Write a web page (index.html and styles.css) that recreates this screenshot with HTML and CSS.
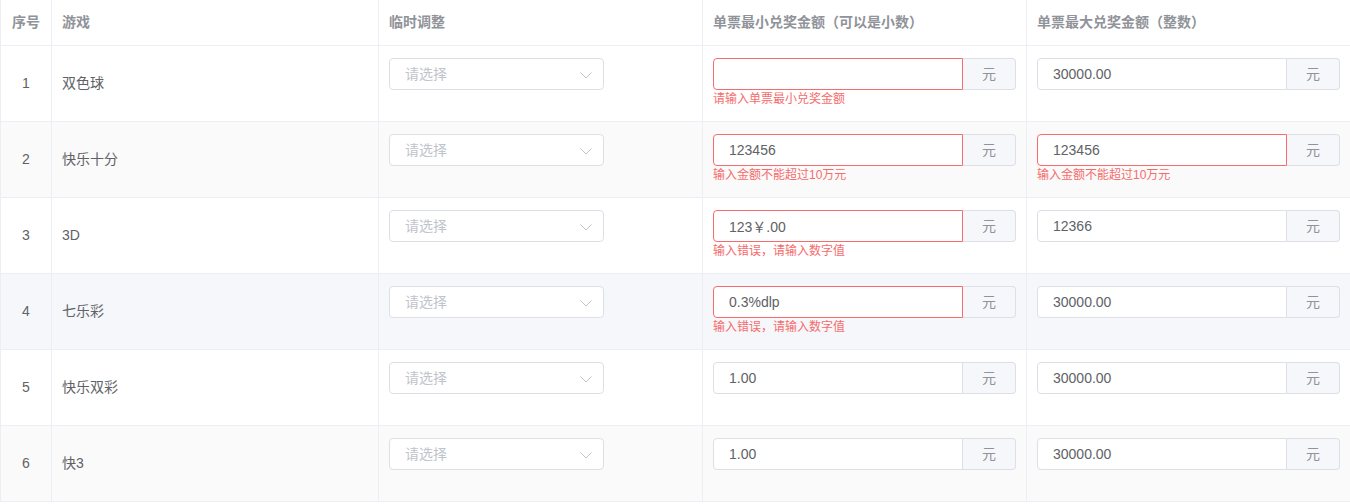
FILE: index.html
```html
<!DOCTYPE html>
<html lang="zh-CN">
<head>
  <meta charset="UTF-8">
  <meta name="viewport" content="width=device-width, initial-scale=1.0">
  <title>兑奖金额设置</title>
  <link rel="stylesheet" href="styles.css">
</head>
<body>
  <div class="prize-table">
    <div class="table-row table-header">
      <div class="cell cell-index">序号</div>
      <div class="cell">游戏</div>
      <div class="cell">临时调整</div>
      <div class="cell">单票最小兑奖金额（可以是小数）</div>
      <div class="cell cell-last">单票最大兑奖金额（整数）</div>
    </div>

    <div class="table-row">
      <div class="cell cell-index">1</div>
      <div class="cell cell-text">双色球</div>
      <div class="cell cell-form">
        <div class="select">
          <span class="placeholder">请选择</span>
          <svg class="select-arrow" width="12" height="7" viewBox="0 0 12 7"><path d="M0.5 0.5L6 6L11.5 0.5" fill="none" stroke="#c0c4cc" stroke-width="1"/></svg>
        </div>
      </div>
      <div class="cell cell-form">
        <div class="form-item is-error">
          <div class="input-group"><input class="input" type="text" value=""><span class="append">元</span></div>
          <div class="form-error">请输入单票最小兑奖金额</div>
        </div>
      </div>
      <div class="cell cell-form cell-last">
        <div class="form-item">
          <div class="input-group"><input class="input" type="text" value="30000.00"><span class="append">元</span></div>
        </div>
      </div>
    </div>

    <div class="table-row striped">
      <div class="cell cell-index">2</div>
      <div class="cell cell-text">快乐十分</div>
      <div class="cell cell-form">
        <div class="select">
          <span class="placeholder">请选择</span>
          <svg class="select-arrow" width="12" height="7" viewBox="0 0 12 7"><path d="M0.5 0.5L6 6L11.5 0.5" fill="none" stroke="#c0c4cc" stroke-width="1"/></svg>
        </div>
      </div>
      <div class="cell cell-form">
        <div class="form-item is-error">
          <div class="input-group"><input class="input" type="text" value="123456"><span class="append">元</span></div>
          <div class="form-error">输入金额不能超过10万元</div>
        </div>
      </div>
      <div class="cell cell-form cell-last">
        <div class="form-item is-error">
          <div class="input-group"><input class="input" type="text" value="123456"><span class="append">元</span></div>
          <div class="form-error">输入金额不能超过10万元</div>
        </div>
      </div>
    </div>

    <div class="table-row">
      <div class="cell cell-index">3</div>
      <div class="cell cell-text">3D</div>
      <div class="cell cell-form">
        <div class="select">
          <span class="placeholder">请选择</span>
          <svg class="select-arrow" width="12" height="7" viewBox="0 0 12 7"><path d="M0.5 0.5L6 6L11.5 0.5" fill="none" stroke="#c0c4cc" stroke-width="1"/></svg>
        </div>
      </div>
      <div class="cell cell-form">
        <div class="form-item is-error">
          <div class="input-group"><input class="input" type="text" value="123￥.00"><span class="append">元</span></div>
          <div class="form-error">输入错误，请输入数字值</div>
        </div>
      </div>
      <div class="cell cell-form cell-last">
        <div class="form-item">
          <div class="input-group"><input class="input" type="text" value="12366"><span class="append">元</span></div>
        </div>
      </div>
    </div>

    <div class="table-row hover">
      <div class="cell cell-index">4</div>
      <div class="cell cell-text">七乐彩</div>
      <div class="cell cell-form">
        <div class="select">
          <span class="placeholder">请选择</span>
          <svg class="select-arrow" width="12" height="7" viewBox="0 0 12 7"><path d="M0.5 0.5L6 6L11.5 0.5" fill="none" stroke="#c0c4cc" stroke-width="1"/></svg>
        </div>
      </div>
      <div class="cell cell-form">
        <div class="form-item is-error">
          <div class="input-group"><input class="input" type="text" value="0.3%dlp"><span class="append">元</span></div>
          <div class="form-error">输入错误，请输入数字值</div>
        </div>
      </div>
      <div class="cell cell-form cell-last">
        <div class="form-item">
          <div class="input-group"><input class="input" type="text" value="30000.00"><span class="append">元</span></div>
        </div>
      </div>
    </div>

    <div class="table-row">
      <div class="cell cell-index">5</div>
      <div class="cell cell-text">快乐双彩</div>
      <div class="cell cell-form">
        <div class="select">
          <span class="placeholder">请选择</span>
          <svg class="select-arrow" width="12" height="7" viewBox="0 0 12 7"><path d="M0.5 0.5L6 6L11.5 0.5" fill="none" stroke="#c0c4cc" stroke-width="1"/></svg>
        </div>
      </div>
      <div class="cell cell-form">
        <div class="form-item">
          <div class="input-group"><input class="input" type="text" value="1.00"><span class="append">元</span></div>
        </div>
      </div>
      <div class="cell cell-form cell-last">
        <div class="form-item">
          <div class="input-group"><input class="input" type="text" value="30000.00"><span class="append">元</span></div>
        </div>
      </div>
    </div>

    <div class="table-row striped">
      <div class="cell cell-index">6</div>
      <div class="cell cell-text">快3</div>
      <div class="cell cell-form">
        <div class="select">
          <span class="placeholder">请选择</span>
          <svg class="select-arrow" width="12" height="7" viewBox="0 0 12 7"><path d="M0.5 0.5L6 6L11.5 0.5" fill="none" stroke="#c0c4cc" stroke-width="1"/></svg>
        </div>
      </div>
      <div class="cell cell-form">
        <div class="form-item">
          <div class="input-group"><input class="input" type="text" value="1.00"><span class="append">元</span></div>
        </div>
      </div>
      <div class="cell cell-form cell-last">
        <div class="form-item">
          <div class="input-group"><input class="input" type="text" value="30000.00"><span class="append">元</span></div>
        </div>
      </div>
    </div>
  </div>
</body>
</html>
```

FILE: styles.css
```css
body {
  margin: 0;
  padding: 0;
  font-family: "Liberation Sans", "Noto Sans CJK SC", sans-serif;
  font-size: 14px;
  color: #606266;
  background-color: #fff;
  overflow: hidden;
}

.prize-table {
  width: 1350px;
  border-left: 1px solid #ebeef5;
  box-sizing: border-box;
}

.table-row {
  display: grid;
  grid-template-columns: 51px 327px 324px 324px 323px;
  height: 76px;
  border-bottom: 1px solid #ebeef5;
  box-sizing: border-box;
}

.table-row.table-header {
  height: 46px;
}

.table-row.striped {
  background-color: #fafafa;
}

.table-row.hover {
  background-color: #f5f7fa;
}

.cell {
  border-right: 1px solid #ebeef5;
  padding: 0 10px;
  box-sizing: border-box;
  display: flex;
  align-items: center;
  line-height: 23px;
}

.cell-last {
  border-right: none;
}

.table-header .cell {
  color: #909399;
  font-weight: bold;
  padding-bottom: 1px;
}

.cell-index {
  justify-content: center;
  padding: 0;
}

.cell-form {
  align-items: flex-start;
  padding-top: 12px;
}

/* select */
.select {
  width: 215px;
  height: 32px;
  border: 1px solid #dcdfe6;
  border-radius: 4px;
  background-color: #fff;
  box-sizing: border-box;
  display: flex;
  align-items: center;
  justify-content: space-between;
  padding: 0 11px 0 15px;
}

.placeholder {
  color: #c0c4cc;
  font-size: 14px;
}

.select-arrow {
  display: block;
  margin-top: 2px;
}

/* input group */
.form-item {
  width: 100%;
}

.input-group {
  display: flex;
  width: 100%;
  height: 32px;
}

.input {
  flex: 1;
  min-width: 0;
  height: 32px;
  margin: 0;
  padding: 0 15px;
  border: 1px solid #dcdfe6;
  border-radius: 4px 0 0 4px;
  background-color: #fff;
  box-sizing: border-box;
  font-family: inherit;
  font-size: 14px;
  color: #606266;
  outline: none;
}

.append {
  width: 53px;
  height: 32px;
  border: 1px solid #dcdfe6;
  border-left: none;
  border-radius: 0 4px 4px 0;
  background-color: #f5f7fa;
  box-sizing: border-box;
  color: #909399;
  display: flex;
  align-items: center;
  justify-content: center;
}

.form-item.is-error .input {
  border-color: #f56c6c;
}

.form-error {
  color: #f56c6c;
  font-size: 12px;
  line-height: 1;
  padding-top: 3px;
}
```
